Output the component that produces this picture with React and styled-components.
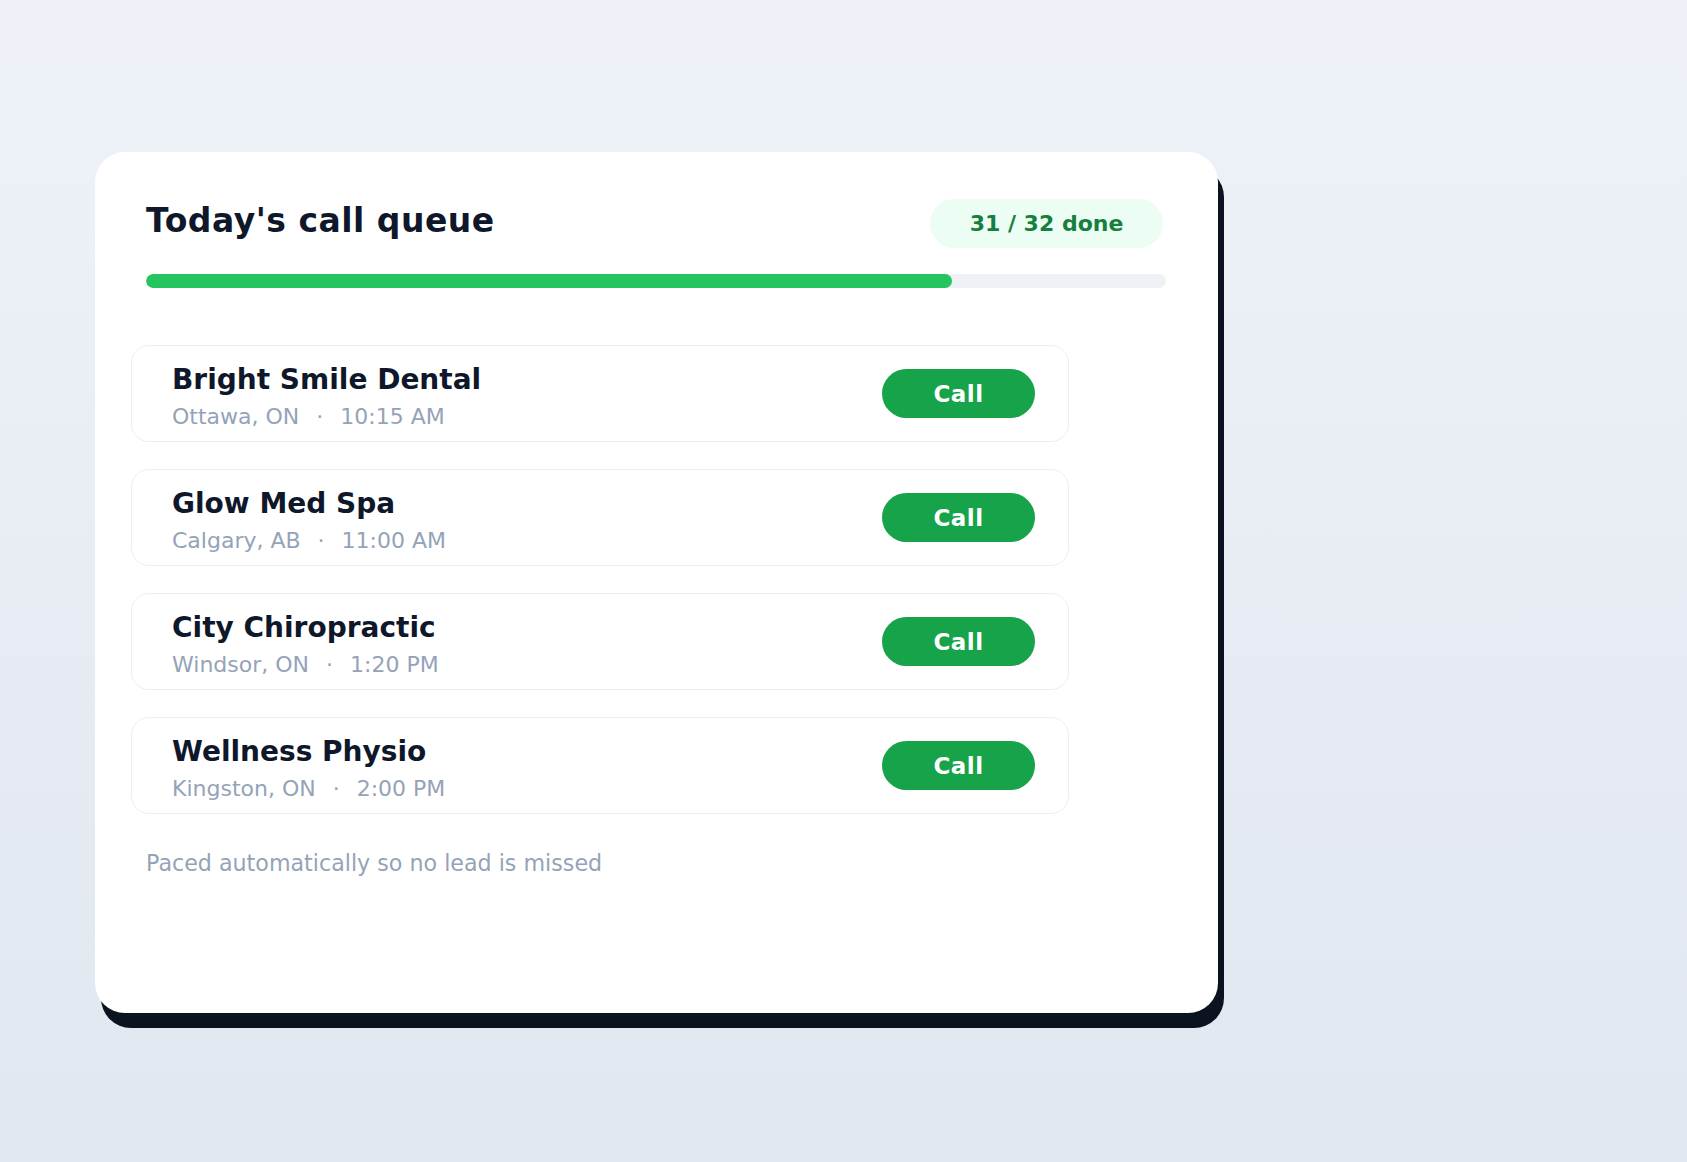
import styled, { createGlobalStyle } from 'styled-components';

const GlobalStyle = createGlobalStyle`
    html, body {
        margin: 0;
        padding: 0;
    }
    body {
        font-family: 'DejaVu Sans', 'Noto Sans', sans-serif;
        background: linear-gradient(to bottom, #eef2f8 0%, #e1e7f0 100%);
        min-height: 100vh;
    }
`;

const Page = styled.div`
    width: 100vw;
    height: 100vh;
    padding: 152px 0 0 95px;
    box-sizing: border-box;
`;

const Card = styled.div`
    width: 1123px;
    height: 861px;
    box-sizing: border-box;
    background: #ffffff;
    border-radius: 30px;
    box-shadow: 6px 15px 0 #0b1220;
    padding: 47px 52px 0 51px;
`;

const Header = styled.div`
    display: flex;
    align-items: center;
    justify-content: space-between;
`;

const Title = styled.h1`
    margin: 0 0 6px;
    font-size: 33px;
    font-weight: 700;
    color: #0f172a;
    letter-spacing: 0.5px;
`;

const Badge = styled.div`
    height: 49px;
    width: 233px;
    margin-right: 3px;
    border-radius: 25px;
    background: #ecfdf3;
    color: #15803d;
    font-size: 22px;
    font-weight: 700;
    display: flex;
    align-items: center;
    justify-content: center;
`;

const Track = styled.div`
    margin-top: 26px;
    height: 14px;
    border-radius: 7px;
    background: #eef1f5;
    overflow: hidden;
`;

const Fill = styled.div`
    height: 100%;
    border-radius: 7px;
    background: #22c55e;
`;

const List = styled.div`
    margin: 57px 0 0 -15px;
    width: 938px;
    display: flex;
    flex-direction: column;
    gap: 27px;
`;

const Row = styled.div`
    height: 97px;
    box-sizing: border-box;
    border: 1.5px solid #eceef2;
    border-radius: 18px;
    display: flex;
    align-items: center;
    justify-content: space-between;
    padding: 0 33px 0 40px;
`;

const Info = styled.div`
    display: flex;
    flex-direction: column;
    gap: 6px;
    margin-top: 6px;
`;

const Name = styled.div`
    font-size: 28px;
    font-weight: 700;
    color: #0f172a;
    line-height: 34px;
`;

const Meta = styled.div`
    display: flex;
    gap: 17px;
    font-size: 22px;
    color: #94a3b8;
    line-height: 28px;
`;

const CallButton = styled.button`
    width: 153px;
    height: 49px;
    border: none;
    border-radius: 25px;
    background: #16a34a;
    color: #ffffff;
    font-family: inherit;
    font-size: 23px;
    font-weight: 700;
    letter-spacing: 0.5px;
    cursor: pointer;
`;

const Footer = styled.p`
    margin: 36px 0 0;
    font-size: 22.2px;
    color: #94a3b8;
`;

const calls = [
    { name: 'Bright Smile Dental', city: 'Ottawa, ON', time: '10:15 AM' },
    { name: 'Glow Med Spa', city: 'Calgary, AB', time: '11:00 AM' },
    { name: 'City Chiropractic', city: 'Windsor, ON', time: '1:20 PM' },
    { name: 'Wellness Physio', city: 'Kingston, ON', time: '2:00 PM' },
];

function App() {
    const progress = 79;
    return (
        <Page>
            <GlobalStyle />
            <Card>
                <Header>
                    <Title>Today's call queue</Title>
                    <Badge>31 / 32 done</Badge>
                </Header>
                <Track>
                    <Fill style={{ width: progress + '%' }} />
                </Track>
                <List>
                    {calls.map((c) => (
                        <Row key={c.name}>
                            <Info>
                                <Name>{c.name}</Name>
                                <Meta>
                                    <span>{c.city}</span>
                                    <span>·</span>
                                    <span>{c.time}</span>
                                </Meta>
                            </Info>
                            <CallButton>Call</CallButton>
                        </Row>
                    ))}
                </List>
                <Footer>Paced automatically so no lead is missed</Footer>
            </Card>
        </Page>
    );
}

export default App;
